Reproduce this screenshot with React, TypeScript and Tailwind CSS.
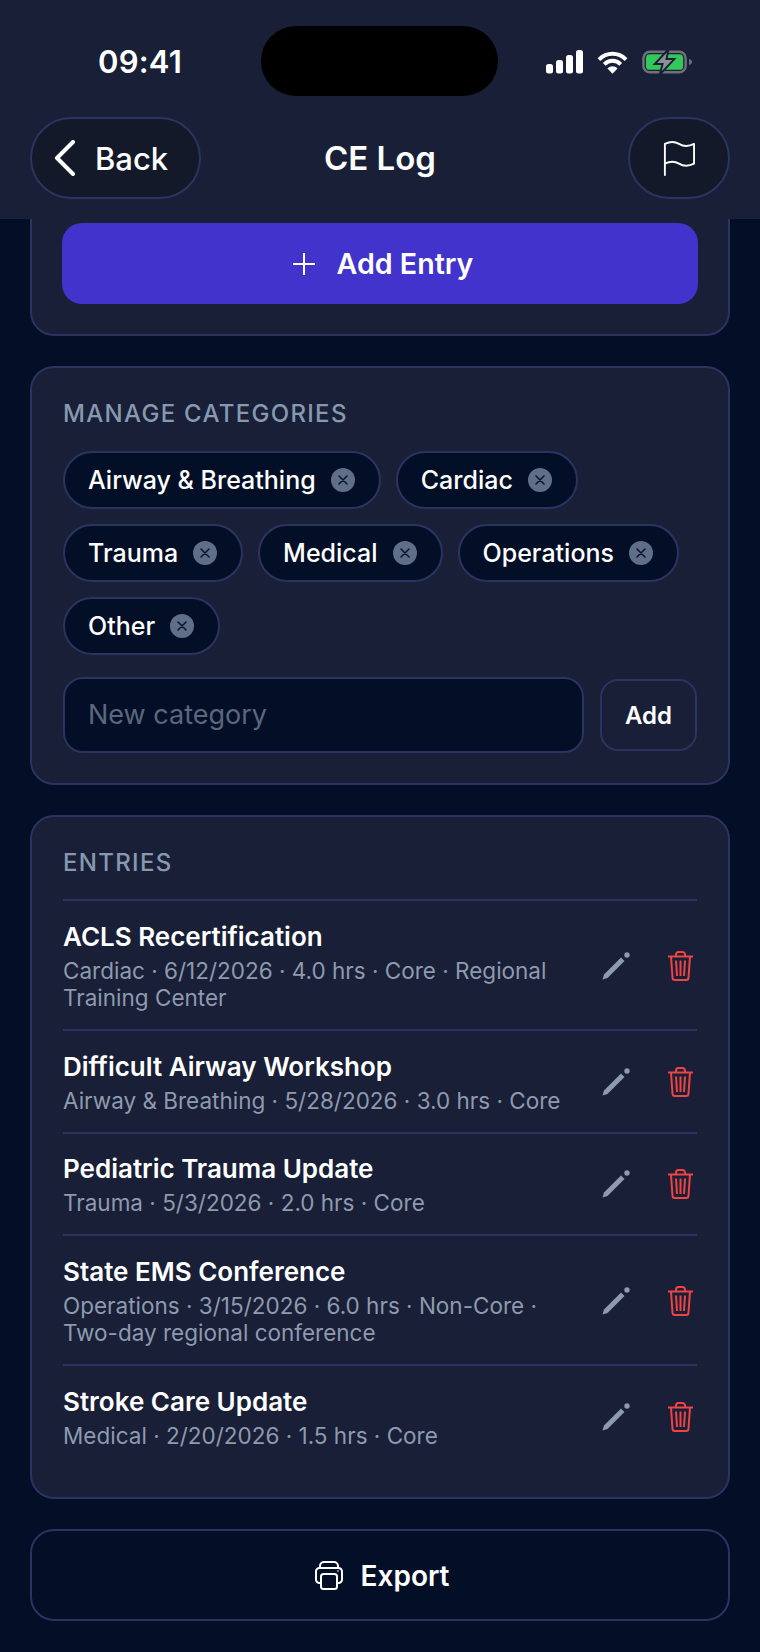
const categories = ["Airway & Breathing", "Cardiac", "Trauma", "Medical", "Operations", "Other"];

const entries = [
  { title: "ACLS Recertification", meta: "Cardiac · 6/12/2026 · 4.0 hrs · Core · Regional Training Center" },
  { title: "Difficult Airway Workshop", meta: "Airway & Breathing · 5/28/2026 · 3.0 hrs · Core" },
  { title: "Pediatric Trauma Update", meta: "Trauma · 5/3/2026 · 2.0 hrs · Core" },
  { title: "State EMS Conference", meta: "Operations · 3/15/2026 · 6.0 hrs · Non-Core · Two-day regional conference" },
  { title: "Stroke Care Update", meta: "Medical · 2/20/2026 · 1.5 hrs · Core" },
];

const StatusIcons = () => (
  <div className="flex items-center gap-[14px]">
    <svg width="37" height="24" viewBox="0 0 37 24" fill="white">
      <rect x="0" y="14" width="7" height="9.500" rx="2.500" />
      <rect x="10" y="10" width="7" height="13.500" rx="2.500" />
      <rect x="20" y="5" width="7" height="18.500" rx="2.500" />
      <rect x="30" y="0" width="7" height="23.500" rx="2.500" />
    </svg>
    <svg width="31" height="24" viewBox="0 0 32 24" fill="none" stroke="white" strokeWidth="4">
      <path d="M2 9.500C10 1.500 22 1.500 30 9.500" />
      <path d="M7.500 14.500C12.500 9.500 19.500 9.500 24.500 14.500" />
      <path d="M16 24L10.800 18.600C13.800 15.800 18.200 15.800 21.200 18.600Z" fill="white" stroke="none" />
    </svg>
    <svg width="51" height="26" viewBox="0 0 52 26" fill="none">
      <rect x="1.500" y="2.500" width="43" height="21" rx="6.500" stroke="#6f7178" strokeWidth="2.500" />
      <rect x="4" y="5" width="38" height="16" rx="4" fill="#34c759" />
      <path d="M48 10c2 .4 3 1.500 3 3s-1 2.600-3 3z" fill="#6f7178" />
      <path d="M27 0L13 15h8l-3 11 15-16h-8z" fill="#8e9098" stroke="#181f36" strokeWidth="2" />
    </svg>
  </div>
);

const Chip = ({ label }: { label: string }) => (
  <div className="flex h-[58px] items-center gap-[15px] rounded-full border-2 border-[#2b3360] bg-[#030f26] pl-[23px] pr-[24px]">
    <span className="text-[25px] font-medium leading-none text-white">{label}</span>
    <span className="flex h-[24px] w-[24px] items-center justify-center rounded-full bg-[#5f6f8a]">
      <svg width="10" height="10" viewBox="0 0 10 10" fill="none" stroke="#0b1226" strokeWidth="1.500" strokeLinecap="round">
        <path d="M1 1L9 9M9 1L1 9" />
      </svg>
    </span>
  </div>
);

const EntryRow = ({ title, meta }: { title: string; meta: string }) => (
  <div className="flex items-center border-t-2 border-[#2b3360] pb-[17.600px] pt-[18.500px]">
    <div className="w-[508px]">
      <div className="text-[26px] font-semibold leading-[33px] text-white">{title}</div>
      <div className="mt-[4px] text-[22.500px] leading-[27.500px] text-[#8e9aae]">{meta}</div>
    </div>
    <div className="ml-auto flex items-center gap-[38px] pr-[4px]">
      <svg width="28" height="28" viewBox="0 0 28 28" fill="none">
        <path d="M0.500 27.500L2 22.500L19 5.500L22.500 9L5.500 26Z" fill="#8e9aae" />
        <circle cx="25" cy="3" r="2.700" fill="#8e9aae" />
      </svg>
      <svg width="25" height="30" viewBox="0 0 25 30" fill="none" stroke="#ef4444" strokeWidth="2">
        <path d="M0 5.500H25" />
        <path d="M8 5.500V3.500A2.500 2.500 0 0 1 10.500 1H14.500A2.500 2.500 0 0 1 17 3.500V5.500" />
        <path d="M3 5.500L4.500 26.500A2.500 2.500 0 0 0 7 29H18A2.500 2.500 0 0 0 20.500 26.500L22 5.500" />
        <path d="M8 9.500L9 25M12.500 9.500V25M17 9.500L16 25" />
      </svg>
    </div>
  </div>
);

export default function App() {
  return (
    <div className="h-[1652px] w-[760px] overflow-hidden bg-[#030f26] font-['Inter',sans-serif] text-white">
      <header className="h-[219px] bg-[#181f36] px-[30px]">
        <div className="relative flex h-[117px] items-start justify-between pl-[68px] pr-[37px] pt-[47px]">
          <span className="text-[31px] font-semibold leading-[30px] tracking-[0.2px]">09:41</span>
          <div className="absolute left-[231px] top-[26px] h-[70px] w-[237px] rounded-full bg-black" />
          <div className="pt-[2px]">
            <StatusIcons />
          </div>
        </div>
        <div className="grid grid-cols-[1fr_auto_1fr] items-center">
          <div className="flex h-[82px] w-[171px] items-center gap-[20px] rounded-[41px] border-2 border-[#2b3360] bg-[#141929] pl-[22px]">
            <svg width="21" height="36" viewBox="0 0 21 36" fill="none" stroke="white" strokeWidth="4" strokeLinecap="round" strokeLinejoin="round">
              <path d="M19 2L3 18L19 34" />
            </svg>
            <span className="text-[31px] font-medium leading-none">Back</span>
          </div>
          <h1 className="text-[33px] font-semibold leading-none">CE Log</h1>
          <div className="flex h-[82px] w-[102px] items-center justify-center justify-self-end rounded-[41px] border-2 border-[#2b3360] bg-[#141929]">
            <svg width="32" height="37" viewBox="0 0 34 37" fill="none" stroke="white" strokeWidth="2" strokeLinecap="round" strokeLinejoin="round">
              <path d="M2 36V3C8 0 12 0 17 3S27 6 33 3V24C27 27 22 27 17 24S8 21 2 24" />
            </svg>
          </div>
        </div>
      </header>

      <main className="flex flex-col gap-[30px] px-[30px]">
        <section className="rounded-b-[24px] border-2 border-t-0 border-[#2b3360] bg-[#181f36] px-[30px] pb-[30px] pt-[4px]">
          <button className="flex h-[81px] w-full items-center justify-center gap-[22px] rounded-[20px] bg-[#4133cb] pl-[6px] pt-[1px] text-[28.600px] font-semibold">
            <svg width="22" height="22" viewBox="0 0 22 22" fill="none" stroke="white" strokeWidth="2">
              <path d="M11 0V22M0 11H22" />
            </svg>
            Add Entry
          </button>
        </section>

        <section className="rounded-[24px] border-2 border-[#2b3360] bg-[#181f36] px-[31px] pb-[30px] pt-[32px]">
          <h2 className="text-[24px] font-medium leading-[28px] tracking-[1.300px] text-[#8799b0]">MANAGE CATEGORIES</h2>
          <div className="mt-[23px] flex flex-wrap gap-x-[15px] gap-y-[15px]">
            {categories.map((c) => (
              <Chip key={c} label={c} />
            ))}
          </div>
          <div className="mt-[22px] flex items-center gap-[16px]">
            <div className="flex h-[76px] flex-1 items-center rounded-[20px] border-2 border-[#2b3360] bg-[#030f26] pl-[23px] pt-[1px] text-[27px] text-[#5b677c]">
              New category
            </div>
            <div className="flex h-[72px] w-[97px] items-center justify-center rounded-[18px] border-2 border-[#2b3360] pt-[1px] text-[24px] font-semibold">
              Add
            </div>
          </div>
        </section>

        <section className="rounded-[24px] border-2 border-[#2b3360] bg-[#181f36] px-[31px] pb-[30.500px] pt-[32px]">
          <h2 className="mb-[22px] text-[24px] font-medium leading-[28px] tracking-[1.300px] text-[#8799b0]">ENTRIES</h2>
          {entries.map((e) => (
            <EntryRow key={e.title} title={e.title} meta={e.meta} />
          ))}
        </section>

        <button className="flex h-[92px] items-center justify-center gap-[18px] rounded-[24px] border-2 border-[#2b3360] pl-[4px] pt-[1px] text-[28px] font-semibold">
          <svg width="28" height="29" viewBox="0 0 28 29" fill="none" stroke="white" strokeWidth="2" strokeLinejoin="round">
            <path d="M5 7V5A4 4 0 0 1 9 1H19A4 4 0 0 1 23 5V7" />
            <path d="M6 22H4.500A3.500 3.500 0 0 1 1 18.500V10.500A3.500 3.500 0 0 1 4.500 7H23.500A3.500 3.500 0 0 1 27 10.500V18.500A3.500 3.500 0 0 1 23.500 22H22" />
            <rect x="6" y="13" width="16" height="15" rx="2.500" />
            <circle cx="23" cy="10" r="0.800" fill="white" stroke="none" />
          </svg>
          Export
        </button>
      </main>
    </div>
  );
}
